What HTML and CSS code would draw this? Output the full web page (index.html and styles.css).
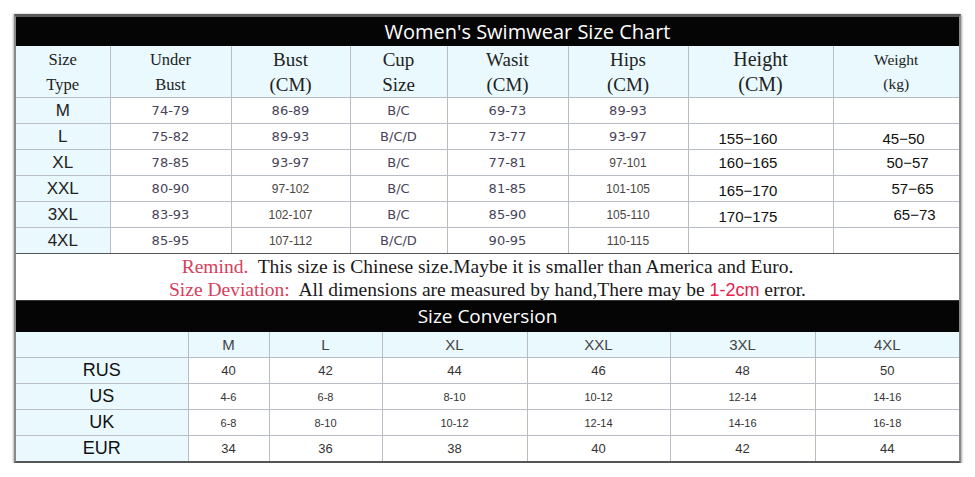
FILE: index.html
```html
<!DOCTYPE html>
<html>
<head>
<meta charset="utf-8">
<link rel="stylesheet" href="styles.css">
</head>
<body>
<div class="chart">
  <div class="bar bar-top">Women's Swimwear Size Chart</div>
  <table class="grid main">
    <colgroup>
      <col style="width:94px"><col style="width:121px"><col style="width:119px"><col style="width:97px">
      <col style="width:121px"><col style="width:120px"><col style="width:145px"><col style="width:126px">
    </colgroup>
    <tr class="head">
      <td class="h-sm">Size<br>Type</td>
      <td class="h-sm">Under<br>Bust</td>
      <td class="h-md">Bust<br>(CM)</td>
      <td class="h-md">Cup<br>Size</td>
      <td class="h-md">Wasit<br>(CM)</td>
      <td class="h-md">Hips<br>(CM)</td>
      <td class="h-lg">Height<br>(CM)</td>
      <td class="h-xs">Weight<br>(kg)</td>
    </tr>
    <tr><td class="lbl">M</td><td>74-79</td><td>86-89</td><td>B/C</td><td>69-73</td><td>89-93</td><td class="hw"></td><td class="hw"></td></tr>
    <tr><td class="lbl">L</td><td>75-82</td><td>89-93</td><td>B/C/D</td><td>73-77</td><td>93-97</td><td class="hw low">155−160</td><td class="hw low w1">45−50</td></tr>
    <tr><td class="lbl">XL</td><td>78-85</td><td>93-97</td><td>B/C</td><td>77-81</td><td class="nr">97-101</td><td class="hw">160−165</td><td class="hw w2">50−57</td></tr>
    <tr><td class="lbl">XXL</td><td>80-90</td><td class="nr">97-102</td><td>B/C</td><td>81-85</td><td class="nr">101-105</td><td class="hw low">165−170</td><td class="hw w3">57−65</td></tr>
    <tr><td class="lbl">3XL</td><td>83-93</td><td class="nr">102-107</td><td>B/C</td><td>85-90</td><td class="nr">105-110</td><td class="hw low">170−175</td><td class="hw w4">65−73</td></tr>
    <tr><td class="lbl">4XL</td><td>85-95</td><td class="nr">107-112</td><td>B/C/D</td><td>90-95</td><td class="nr">110-115</td><td class="hw"></td><td class="hw"></td></tr>
  </table>
  <div class="remind">
    <p><span class="red">Remind.</span>&nbsp; This size is Chinese size.Maybe it is smaller than America and Euro.</p>
    <p><span class="red">Size Deviation:</span>&nbsp; All dimensions are measured by hand,There may be <span class="cm">1-2cm</span> error.</p>
  </div>
  <div class="bar bar-conv">Size Conversion</div>
  <table class="grid conv">
    <colgroup>
      <col style="width:172px"><col style="width:81px"><col style="width:113px"><col style="width:145px">
      <col style="width:143px"><col style="width:145px"><col style="width:144px">
    </colgroup>
    <tr class="chead"><td></td><td>M</td><td>L</td><td>XL</td><td>XXL</td><td>3XL</td><td>4XL</td></tr>
    <tr><td class="clbl">RUS</td><td>40</td><td>42</td><td>44</td><td>46</td><td>48</td><td>50</td></tr>
    <tr class="sm"><td class="clbl">US</td><td>4-6</td><td>6-8</td><td>8-10</td><td>10-12</td><td>12-14</td><td>14-16</td></tr>
    <tr class="sm"><td class="clbl">UK</td><td>6-8</td><td>8-10</td><td>10-12</td><td>12-14</td><td>14-16</td><td>16-18</td></tr>
    <tr><td class="clbl">EUR</td><td>34</td><td>36</td><td>38</td><td>40</td><td>42</td><td>44</td></tr>
  </table>
</div>
</body>
</html>
```

FILE: styles.css
```css
html, body {
  margin: 0;
  padding: 0;
  background: #ffffff;
}
.chart {
  margin: 14px 0 0 14px;
  width: 947px;
  box-sizing: border-box;
  border-top: 3px solid #5a5a5a;
  border-left: 2px solid #8a8a8a;
  border-right: 2px solid #8a8a8a;
  border-bottom: 2px solid #555;
  box-shadow: 1px 1px 2px rgba(0,0,0,0.35), -1px 0 2px rgba(0,0,0,0.25);
}
.bar {
  background: #050505;
  color: #ffffff;
  text-align: center;
  font-family: "Open Sans", "Noto Sans", sans-serif;
}
.bar-top {
  height: 29px;
  line-height: 30px;
  font-size: 20px;
  padding-left: 80px;
}
.bar-conv {
  height: 31px;
  line-height: 31px;
  font-size: 19px;
  border-top: 1px solid #333;
}
.grid {
  width: 943px;
  border-collapse: collapse;
  table-layout: fixed;
}
.grid td {
  border: 1px solid #b8bcc4;
  text-align: center;
  padding: 0;
  height: 25px;
  font-family: "DejaVu Sans", Verdana, sans-serif;
  font-size: 13px;
  color: #48445a;
}
.grid tr > td:first-child { border-left: none; }
.grid tr > td:last-child { border-right: none; }
.main tr.head td {
  height: 51px;
  border-top: none;
  background: #e9f9fd;
  font-family: "Liberation Serif", "DejaVu Serif", serif;
  color: #222;
  line-height: 25px;
  font-size: 18px;
}
.main tr.head td.h-sm { font-size: 16.5px; }
.main tr.head td.h-md { font-size: 19px; }
.main tr.head td.h-lg { font-size: 20px; }
.main tr.head td.h-xs { font-size: 15.5px; line-height: 24px; }
.main td.lbl {
  background: #e9f9fd;
  font-family: "Liberation Sans", Arial, sans-serif;
  font-size: 17px;
  color: #222;
}
.main td.nr {
  font-family: "Liberation Sans", Arial, sans-serif;
  font-size: 12px;
  color: #4a4540;
}
.main td.hw {
  text-align: left;
  font-family: "Liberation Sans", Arial, sans-serif;
  font-size: 15px;
  color: #111;
  padding-left: 30px;
}
.main td.low { padding-top: 4px; height: 21px; }
.main td.w1 { padding-left: 49px; }
.main td.w2 { padding-left: 53px; }
.main td.w3 { padding-left: 58px; }
.main td.w4 { padding-left: 60px; }
.main tr:last-child td { border-bottom: 1px solid #555; }
.remind {
  height: 46px;
  padding-top: 1px;
  box-sizing: border-box;
  text-align: center;
  font-family: "Liberation Serif", "DejaVu Serif", serif;
  font-size: 19.5px;
  color: #1a1a1a;
}
.remind p {
  margin: 0;
  line-height: 23px;
}
.red { color: #d8405e; }
.cm {
  color: #e8204c;
  font-family: "Liberation Sans", Arial, sans-serif;
  font-size: 18px;
}
.conv td {
  font-family: "Liberation Sans", Arial, sans-serif;
  font-size: 13px;
  color: #333;
}
.conv tr.chead td {
  background: #e9f9fd;
  border-top: none;
  font-size: 15px;
  color: #444;
}
.conv tr.sm td { font-size: 11px; }
.conv td.clbl, .conv tr.sm td.clbl {
  background: #e9f9fd;
  font-size: 18px;
  color: #111;
}
.conv tr:last-child td { border-bottom: none; }
```
